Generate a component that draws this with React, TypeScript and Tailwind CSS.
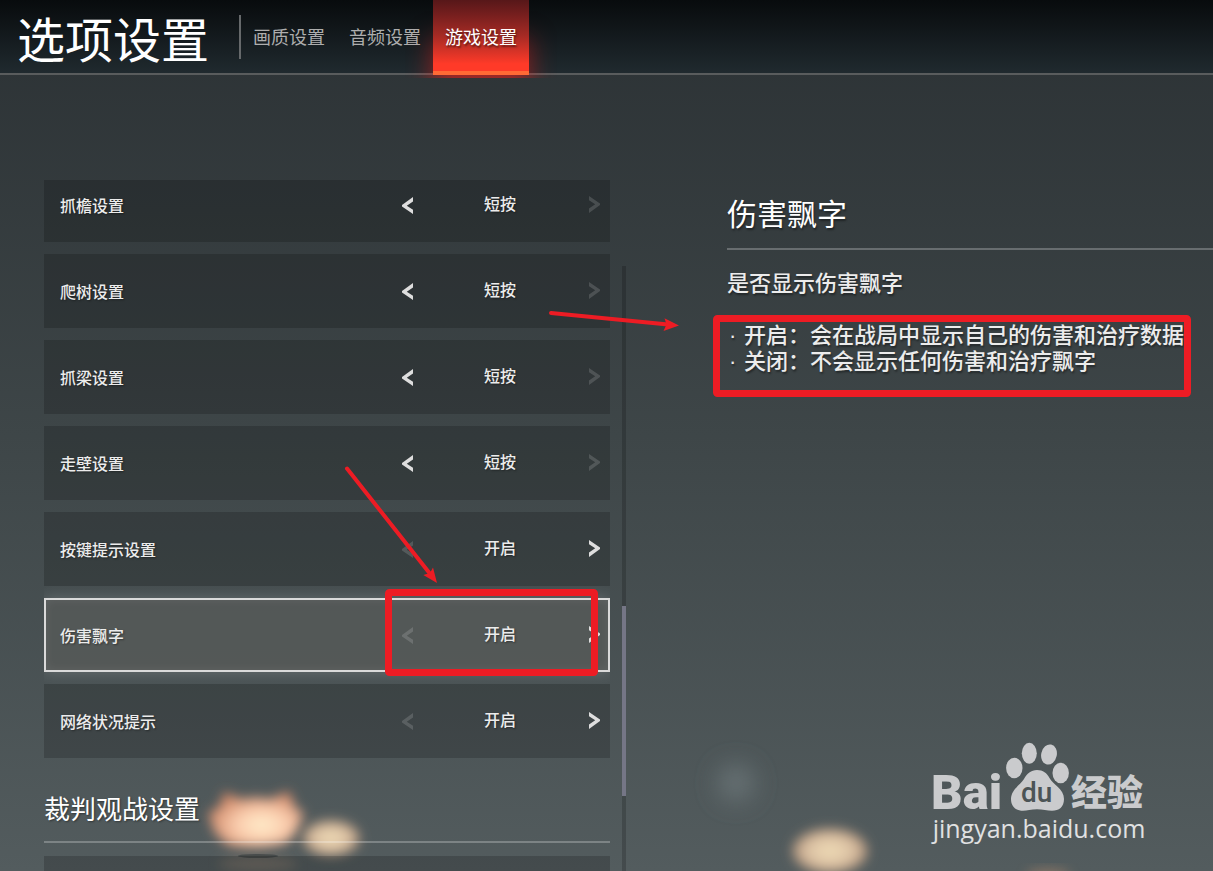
import React from 'react';

const tabs = [
  { id: 'graphics', label: '画质设置' },
  { id: 'audio', label: '音频设置' },
  { id: 'game', label: '游戏设置' },
];

const settings = [
  { id: 'eave', label: '抓檐设置', value: '短按', prev: true, next: false },
  { id: 'tree', label: '爬树设置', value: '短按', prev: true, next: false },
  { id: 'beam', label: '抓梁设置', value: '短按', prev: true, next: false },
  { id: 'wall', label: '走壁设置', value: '短按', prev: true, next: false },
  { id: 'keys', label: '按键提示设置', value: '开启', prev: false, next: true },
  { id: 'damage', label: '伤害飘字', value: '开启', prev: false, next: true },
  { id: 'network', label: '网络状况提示', value: '开启', prev: false, next: true },
];

const details = [
  '开启：会在战局中显示自己的伤害和治疗数据',
  '关闭：不会显示任何伤害和治疗飘字',
];

const Chevron = ({ flip = false }) => (
  <svg viewBox="0 0 11 17" className={flip ? 'w-[11px] h-[17px] rotate-180' : 'w-[11px] h-[17px]'} fill="currentColor">
    <path d="M11 0v4.500L4.800 8.700 11 12.700V17L0 9.500V8z" />
  </svg>
);

type Setting = (typeof settings)[number];

const SettingRow = ({ item, selected }: { item: Setting; selected: boolean }) => (
  <div
    role="group"
    aria-labelledby={item.id}
    className={
      selected
        ? 'flex items-center h-[74px] shrink-0 pl-[14px] border-2 border-[#dadada] bg-[#565958]/85 shadow-[0_0_14px_rgba(255,255,255,0.18),inset_0_0_10px_rgba(255,255,255,0.08)]'
        : 'flex items-center h-[74px] shrink-0 pl-4 bg-black/18'
    }
  >
    <span id={item.id} className="flex-1">{item.label}</span>
    <div className={selected ? 'flex items-center w-[218px] -mr-0.5' : 'flex items-center w-[218px]'}>
      <button
        aria-label="上一项"
        disabled={!item.prev}
        className="flex justify-center w-[31px] py-3 text-[#dedede] disabled:text-white/15"
      >
        <Chevron />
      </button>
      <span className="flex-1 pb-1 pr-0.5 text-center">{item.value}</span>
      <button
        aria-label="下一项"
        disabled={!item.next}
        className="flex justify-center w-[31px] pt-3 pb-3.5 text-[#dedede] disabled:text-white/15"
      >
        <Chevron flip />
      </button>
    </div>
  </div>
);

// Out-of-focus lotus lamps floating on the water
const Backdrop = () => (
  <svg className="absolute inset-0 w-full h-full" aria-hidden="true">
    <defs>
      <filter id="soft" x="-50%" y="-50%" width="200%" height="200%">
        <feGaussianBlur stdDeviation="6" />
      </filter>
      <filter id="softer" x="-150%" y="-150%" width="400%" height="400%">
        <feGaussianBlur stdDeviation="12" />
      </filter>
      <radialGradient id="petal" cx="0.56" cy="0.6" r="0.58">
        <stop offset="0" stopColor="#ffeecb" />
        <stop offset="0.45" stopColor="#fbcdae" />
        <stop offset="1" stopColor="#cc8464" />
      </radialGradient>
      <radialGradient id="lamp">
        <stop offset="0" stopColor="#efdcb6" />
        <stop offset="0.6" stopColor="#dcc2a4" />
        <stop offset="1" stopColor="#a88c76" />
      </radialGradient>
    </defs>
    <path
      d="M208 813l11-6 5-15 18 7 14-2 14 2 19-8 7 18 8 3-6 18-11 13q-29 8-60 2l-13-13z"
      fill="url(#petal)"
      filter="url(#soft)"
    />
    <ellipse cx="258" cy="864" rx="40" ry="7" fill="#8a7a6c" opacity="0.6" filter="url(#soft)" />
    <ellipse cx="258" cy="856" rx="20" ry="2" fill="#343a3c" opacity="0.6" />
    <ellipse cx="331" cy="838" rx="29" ry="18" fill="url(#lamp)" filter="url(#soft)" />
    <ellipse cx="830" cy="851" rx="38" ry="23" fill="url(#lamp)" filter="url(#soft)" />
    <circle cx="736" cy="783" r="18" fill="#687274" filter="url(#softer)" />
    <ellipse cx="1048" cy="875" rx="22" ry="6" fill="#a08068" opacity="0.7" filter="url(#soft)" />
  </svg>
);

const Annotations = () => (
  <svg className="absolute inset-0 w-full h-full pointer-events-none" aria-hidden="true">
    <g fill="none" stroke="#ed1c24" strokeLinecap="round">
      <path d="M551 313L668 324.500" strokeWidth="4" />
      <path d="M347 468.500L431 575" strokeWidth="4" />
      <rect x="716.500" y="318.500" width="471" height="75" rx="1" strokeWidth="7" />
      <rect x="388.500" y="592.500" width="206" height="80" rx="1" strokeWidth="7" />
    </g>
    <g fill="#ed1c24">
      <path d="M679 325.500L664.500 318.300 666.500 324.500 663.500 331z" />
      <path d="M437 583L433 567.600 430 573 423.300 575z" />
    </g>
  </svg>
);

const Watermark = () => (
  <div className="absolute right-[66px] bottom-[26px] text-[#e0e1e2]">
    <svg viewBox="0 0 216 82" className="w-[216px] h-[82px] -mb-3" fill="#cacbcd">
      <text x="0" y="68" className="font-[Roboto] font-black text-[49px]">Bai</text>
      <ellipse cx="83.300" cy="27" rx="8.200" ry="10.300" />
      <ellipse cx="98.300" cy="12.300" rx="7.500" ry="10.500" />
      <ellipse cx="118" cy="13.500" rx="7.800" ry="10.200" transform="rotate(12 118 13.500)" />
      <ellipse cx="129.700" cy="32" rx="8.200" ry="10.300" />
      <path d="M106 29c6 0 10 3 12.500 8 3 6 14.500 11 14.500 21 0 8-5 11.800-12 11.800-5 0-9-1.600-15-1.600s-10 1.600-14 1.600c-7 0-12-4-12-11.800 0-9 9-14 13-20 3-5.500 7-9 13-9z" />
      <text x="90" y="61" fill="#4c5456" className="font-[Roboto] font-medium text-[28px]">du</text>
      <text x="140" y="65" className="font-['Noto_Sans_CJK_SC'] font-black text-4xl">经验</text>
    </svg>
    <div className="font-['Open_Sans',sans-serif] font-medium text-[25px] leading-[34px] text-center whitespace-nowrap">
      jingyan.baidu.com
    </div>
  </div>
);

const App = () => {
  return (
    <div className="relative flex flex-col h-screen overflow-hidden bg-linear-to-b from-[#2b3134] via-[#3e4648] to-[#535c5e] text-white font-['Noto_Sans_CJK_SC',sans-serif]">
      <Backdrop />

      <header className="relative flex items-stretch h-[75px] shrink-0 pl-[17px] border-b-2 border-[#595c5d] bg-linear-to-b from-[#080b0d] to-[#202a2f]">
        <h1 className="flex items-center w-[222px] text-5xl leading-none whitespace-nowrap">选项设置</h1>
        <div className="w-0.5 h-11 mt-[15px] bg-[#66696b]" />
        <nav role="tablist" className="flex -mb-0.5 text-lg leading-none">
          {tabs.map((tab) => (
            <button
              key={tab.id}
              role="tab"
              aria-selected={tab.id === 'game'}
              className={
                tab.id === 'game'
                  ? 'w-24 border-b-4 border-[#ff6a35] bg-linear-to-b from-[#571719] via-[#a52a24] to-[#ff3a28] to-90% shadow-[0_40px_24px_0_rgba(240,30,25,0.55)] [clip-path:inset(0_-28px_-3px_-28px)] text-white text-shadow-[1px_2px_2px_rgba(0,0,0,0.5)]'
                  : 'w-24 border-b-4 border-transparent text-[#aeaeae]'
              }
            >
              {tab.label}
            </button>
          ))}
        </nav>
      </header>

      <main className="relative flex flex-1 min-h-0 pl-11 pt-[105px]">
        <section className="w-[566px] shrink-0 overflow-hidden text-base leading-6 font-medium text-[#ececec] text-shadow-[1px_1px_2px_rgba(0,0,0,0.4)]">
          <div className="flex flex-col gap-3 -mt-3">
            {settings.map((item) => (
              <SettingRow key={item.id} item={item} selected={item.id === 'damage'} />
            ))}
          </div>
          <h2 className="flex items-center h-[85px] pt-4 mb-[13px] border-b-2 border-white/25 text-[26px] leading-none font-normal text-white">
            裁判观战设置
          </h2>
          <div className="h-[74px] bg-black/18" />
        </section>

        <div className="flex flex-col w-1 ml-3 mt-[86px] shrink-0 bg-black/18">
          <div className="h-[190px] mt-[340px] shrink-0 bg-[#757686]" />
        </div>

        <aside className="flex-1 ml-[101px] text-[22px] leading-[26px] font-medium text-[#ececec] whitespace-nowrap text-shadow-[1px_2px_2px_rgba(0,0,0,0.4)]">
          <h2 className="h-[70px] pt-4 border-b-2 border-white/25 text-3xl leading-8 font-normal text-white">伤害飘字</h2>
          <p className="mt-[18px]">是否显示伤害飘字</p>
          <ul className="mt-[26px]">
            {details.map((line) => (
              <li key={line} className="flex items-baseline h-[26px]">
                <span className="w-[17px] pl-0.5 font-['Liberation_Sans',sans-serif]">·</span>
                {line}
              </li>
            ))}
          </ul>
        </aside>
      </main>

      <Watermark />
      <Annotations />
    </div>
  );
};

export default App;
